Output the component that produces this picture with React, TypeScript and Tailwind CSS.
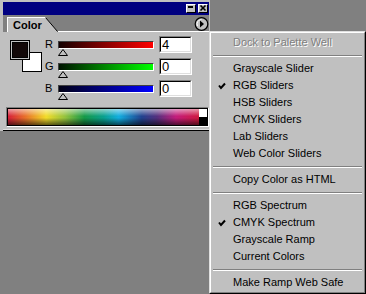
import React from "react";

const sliders = [
  { label: "R", value: "4", bar: "bg-[linear-gradient(to_right,#140000,#ff0000)]" },
  { label: "G", value: "0", bar: "bg-[linear-gradient(to_right,#001400,#00ff00)]" },
  { label: "B", value: "0", bar: "bg-[linear-gradient(to_right,#000014,#0000ff)]" },
];

type MenuEntry = { label: string; checked?: boolean; disabled?: boolean } | "sep";

const menu: MenuEntry[] = [
  { label: "Dock to Palette Well", disabled: true },
  "sep",
  { label: "Grayscale Slider" },
  { label: "RGB Sliders", checked: true },
  { label: "HSB Sliders" },
  { label: "CMYK Sliders" },
  { label: "Lab Sliders" },
  { label: "Web Color Sliders" },
  "sep",
  { label: "Copy Color as HTML" },
  "sep",
  { label: "RGB Spectrum" },
  { label: "CMYK Spectrum", checked: true },
  { label: "Grayscale Ramp" },
  { label: "Current Colors" },
  "sep",
  { label: "Make Ramp Web Safe" },
];

function TitleButton({ kind }: { kind: "min" | "close" }) {
  return (
    <div className="h-[9px] w-[10px] border-t border-l border-t-white border-l-white border-r border-b border-r-black border-b-black bg-[#c0c0c0]">
      <svg width="8" height="7" viewBox="0 0 8 7" className="block">
        {kind === "min" ? (
          <rect x="1" y="1" width="5" height="2" fill="#000" />
        ) : (
          <path d="M1.5 0.5 L6.5 5.5 M6.5 0.5 L1.5 5.5" stroke="#000" strokeWidth="1.6" />
        )}
      </svg>
    </div>
  );
}

function SliderRow({ label, value, bar }: { label: string; value: string; bar: string }) {
  return (
    <div className="flex h-[17px] items-center">
      <div className="w-[13px] text-[11px] leading-none text-black">{label}</div>
      <div className="relative h-[17px] w-[96px]">
        <div className={`mt-[5px] h-[8px] w-[96px] border border-t-[#404040] border-l-[#404040] border-b-white border-r-white ${bar}`} />
        <svg width="10" height="7" viewBox="0 0 10 7" className="absolute left-0 top-[13px]">
          <path d="M5 0.5 L9.5 6.5 L0.5 6.5 Z" fill="#c0c0c0" stroke="#000" strokeWidth="1" />
        </svg>
      </div>
      <div className="ml-[5px] h-[17px] w-[33px] border border-t-[#808080] border-l-[#808080] border-r-white border-b-white">
        <div className="flex h-full items-center border border-t-black border-l-black border-r-[#dfdfdf] border-b-[#dfdfdf] bg-white pl-[1px] text-[13px] leading-none text-black">
          {value}
        </div>
      </div>
    </div>
  );
}

function MenuItem({ label, checked, disabled }: { label: string; checked?: boolean; disabled?: boolean }) {
  return (
    <div className="flex h-[17px] items-center">
      <div className="flex w-[22px] pl-[7px]">
        {checked && (
          <svg width="8" height="8" viewBox="0 0 8 8">
            <path d="M1 3.5 L3 6 L7 1.5" fill="none" stroke="#000" strokeWidth="2" />
          </svg>
        )}
      </div>
      <span
        className={
          disabled
            ? "text-[11px] leading-none text-[#808080] [text-shadow:1px_1px_0_#fff]"
            : "text-[11px] leading-none text-black"
        }
      >
        {label}
      </span>
    </div>
  );
}

export default function App() {
  return (
    <div className="relative h-[294px] w-[366px] overflow-hidden bg-[#808080] font-['Liberation_Sans',Arial,sans-serif]">
      {/* palette window */}
      <div className="w-[210px] border-l-[3px] border-r border-[#c0c0c0] bg-[#c0c0c0] pt-[2px]">
        <div className="flex h-[13px] items-center justify-end gap-[2px] bg-[#000080] pr-[1px]">
          <TitleButton kind="min" />
          <TitleButton kind="close" />
        </div>

        <div className="flex h-[17px] bg-[#808080]">
          <div className="w-[4px]" />
          <div className="mt-[2px] flex h-[15px] w-[38px] items-center border-t border-l border-white bg-[#c0c0c0] pl-[5px] text-[11px] font-bold leading-none text-black">
            Color
          </div>
          <svg width="13" height="15" viewBox="0 0 13 15" className="mt-[2px] block">
            <path d="M0 0 L0.5 0 L13 15 L0 15 Z" fill="#c0c0c0" />
            <path d="M0 0.5 L0.5 0.5 L12.5 14.5" stroke="#000" strokeWidth="1" fill="none" />
            <path d="M0 0.5 L0.5 0.5" stroke="#fff" strokeWidth="1" />
          </svg>
          <div className="flex flex-1 flex-col">
            <div className="flex flex-1 justify-end pt-[2px]">
              <svg width="15" height="14" viewBox="0 0 15 14" className="block">
                <circle cx="7.5" cy="7" r="6.3" fill="#c0c0c0" stroke="#000" strokeWidth="1.2" />
                <path d="M3.5 9 A4.5 4.5 0 0 1 7.5 2.5" stroke="#fff" fill="none" strokeWidth="1" />
                <path d="M6 3.5 L10 7 L6 10.5 Z" fill="#000" />
              </svg>
            </div>
            <div className="h-[1px] bg-white" />
          </div>
        </div>

        <div className="bg-[#c0c0c0] pt-[4px] pb-[2px]">
          <div className="flex">
            <div className="relative ml-[7px] mt-[4px] h-[33px] w-[32px]">
              <div className="absolute left-[12px] top-[12px] h-[20px] w-[20px] border border-black bg-white" />
              <div className="absolute left-0 top-0 h-[20px] w-[20px] border border-black bg-[#c0c0c0] p-[1px]">
                <div className="h-full w-full border border-black bg-[#120808]" />
              </div>
            </div>
            <div className="ml-[3px] flex flex-col gap-[5px]">
              {sliders.map((s) => (
                <SliderRow key={s.label} {...s} />
              ))}
            </div>
          </div>

          <div className="ml-[3px] mt-[10px] flex h-[20px] w-[203px] border border-t-[#808080] border-l-[#808080] border-r-white border-b-white">
            <div className="flex flex-1 border border-black">
              <div className="relative flex-1 bg-[linear-gradient(to_right,#d6203a_0%,#e8702a_9%,#f2dc2a_20%,#93c23e_30%,#159a48_40%,#0aa08e_50%,#12aee0_58%,#21428f_70%,#54307e_78%,#c41d7c_88%,#cf1a3e_100%)]">
                <div className="absolute inset-0 bg-[linear-gradient(to_bottom,rgba(255,255,255,0.55)_0%,rgba(255,255,255,0)_45%,rgba(0,0,0,0)_55%,rgba(0,0,0,0.6)_100%)]" />
              </div>
              <div className="flex w-[8px] flex-col">
                <div className="flex-1 bg-white" />
                <div className="flex-1 bg-black" />
              </div>
            </div>
          </div>
        </div>
        <div className="h-[1px] bg-[#dfdfdf]" />
        <div className="h-[1px] bg-black" />
      </div>

      {/* flyout menu */}
      <div className="absolute left-[209px] top-[31px] h-[263px] w-[157px] border border-t-[#dfdfdf] border-l-[#dfdfdf] border-r-black border-b-black bg-[#c0c0c0]">
        <div className="h-full border border-t-white border-l-white border-r-[#808080] border-b-[#808080] pt-[1px]">
          {menu.map((m, i) =>
            m === "sep" ? (
              <div key={i} className="h-[9px] px-[2px] pt-[4px]">
                <div className="h-[2px] border-t border-b border-t-[#808080] border-b-white" />
              </div>
            ) : (
              <MenuItem key={i} {...m} />
            )
          )}
        </div>
      </div>
    </div>
  );
}
